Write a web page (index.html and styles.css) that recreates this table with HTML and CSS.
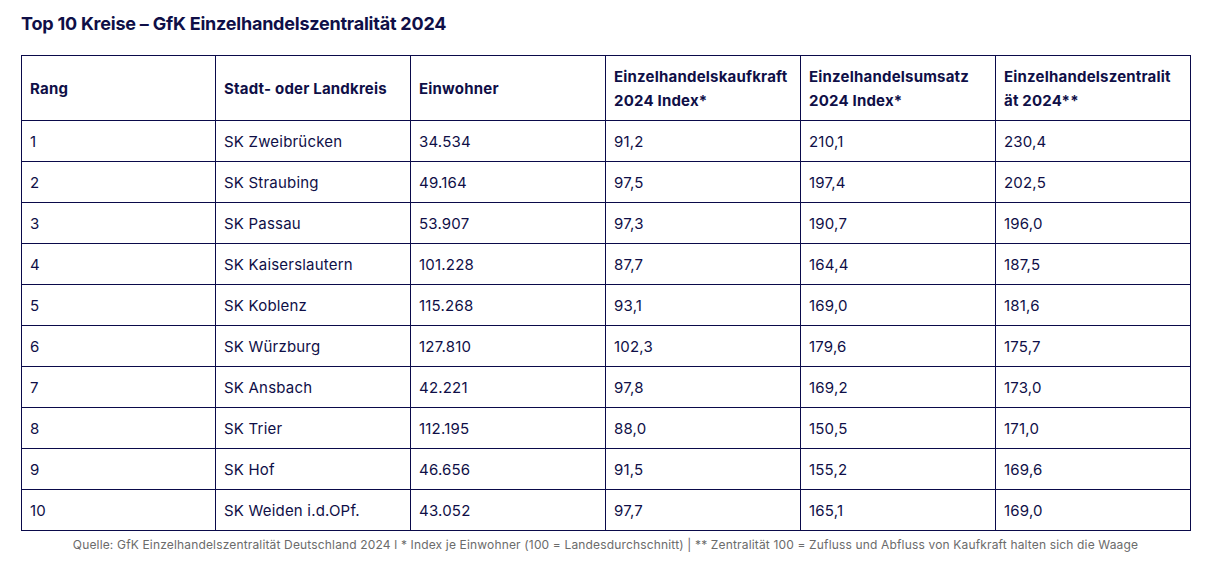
FILE: index.html
```html
<!DOCTYPE html>
<html lang="de">
<head>
<meta charset="utf-8">
<title>Top 10 Kreise – GfK Einzelhandelszentralität 2024</title>
<link rel="stylesheet" href="styles.css">
</head>
<body>
<div class="page">
  <h1 class="title">Top 10 Kreise – GfK Einzelhandelszentralität 2024</h1>
  <table class="data">
    <colgroup>
      <col class="col col-first"><col class="col"><col class="col"><col class="col"><col class="col"><col class="col">
    </colgroup>
    <thead>
      <tr>
        <th>Rang</th>
        <th>Stadt- oder Landkreis</th>
        <th>Einwohner</th>
        <th>Einzelhandelskaufkraft 2024 Index*</th>
        <th>Einzelhandelsumsatz 2024 Index*</th>
        <th>Einzelhandelszentralit<wbr>ät 2024**</th>
      </tr>
    </thead>
    <tbody>
      <tr><td>1</td><td>SK Zweibrücken</td><td>34.534</td><td>91,2</td><td>210,1</td><td>230,4</td></tr>
      <tr><td>2</td><td>SK Straubing</td><td>49.164</td><td>97,5</td><td>197,4</td><td>202,5</td></tr>
      <tr><td>3</td><td>SK Passau</td><td>53.907</td><td>97,3</td><td>190,7</td><td>196,0</td></tr>
      <tr><td>4</td><td>SK Kaiserslautern</td><td>101.228</td><td>87,7</td><td>164,4</td><td>187,5</td></tr>
      <tr><td>5</td><td>SK Koblenz</td><td>115.268</td><td>93,1</td><td>169,0</td><td>181,6</td></tr>
      <tr><td>6</td><td>SK Würzburg</td><td>127.810</td><td>102,3</td><td>179,6</td><td>175,7</td></tr>
      <tr><td>7</td><td>SK Ansbach</td><td>42.221</td><td>97,8</td><td>169,2</td><td>173,0</td></tr>
      <tr><td>8</td><td>SK Trier</td><td>112.195</td><td>88,0</td><td>150,5</td><td>171,0</td></tr>
      <tr><td>9</td><td>SK Hof</td><td>46.656</td><td>91,5</td><td>155,2</td><td>169,6</td></tr>
      <tr><td>10</td><td>SK Weiden i.d.OPf.</td><td>43.052</td><td>97,7</td><td>165,1</td><td>169,0</td></tr>
    </tbody>
  </table>
  <p class="source">Quelle: GfK Einzelhandelszentralität Deutschland 2024 l * Index je Einwohner (100 = Landesdurchschnitt) | ** Zentralität 100 = Zufluss und Abfluss von Kaufkraft halten sich die Waage</p>
</div>
</body>
</html>
```
FILE: styles.css
```css
html, body {
  margin: 0;
  padding: 0;
  background: #ffffff;
}

body {
  font-family: Inter, "Liberation Sans", sans-serif;
  color: #0f0f47;
}

.page {
  width: 1169px;
  padding: 13px 0 0 21px;
}

.title {
  margin: 0 0 20px 0;
  font-size: 18px;
  line-height: 22px;
  font-weight: 700;
  letter-spacing: -0.22px;
  color: #0f0f47;
}

.data {
  border-collapse: collapse;
  table-layout: fixed;
  width: 1169px;
}

.col {
  width: 195px;
}

.col-first {
  width: 194px;
}

.data th,
.data td {
  border: 1px solid #0a0a4a;
  text-align: left;
  padding: 2px 8px 0 8px;
  font-size: 15px;
  letter-spacing: 0.2px;
  vertical-align: middle;
}

.data th {
  height: 62px;
  font-weight: 700;
  line-height: 24px;
}

.data td {
  height: 38px;
  font-weight: 400;
  line-height: 20px;
}

.source {
  margin: 6px 0 0 0;
  text-align: center;
  font-size: 12px;
  line-height: 16px;
  letter-spacing: 0.16px;
  color: #6b6b6b;
}
```
